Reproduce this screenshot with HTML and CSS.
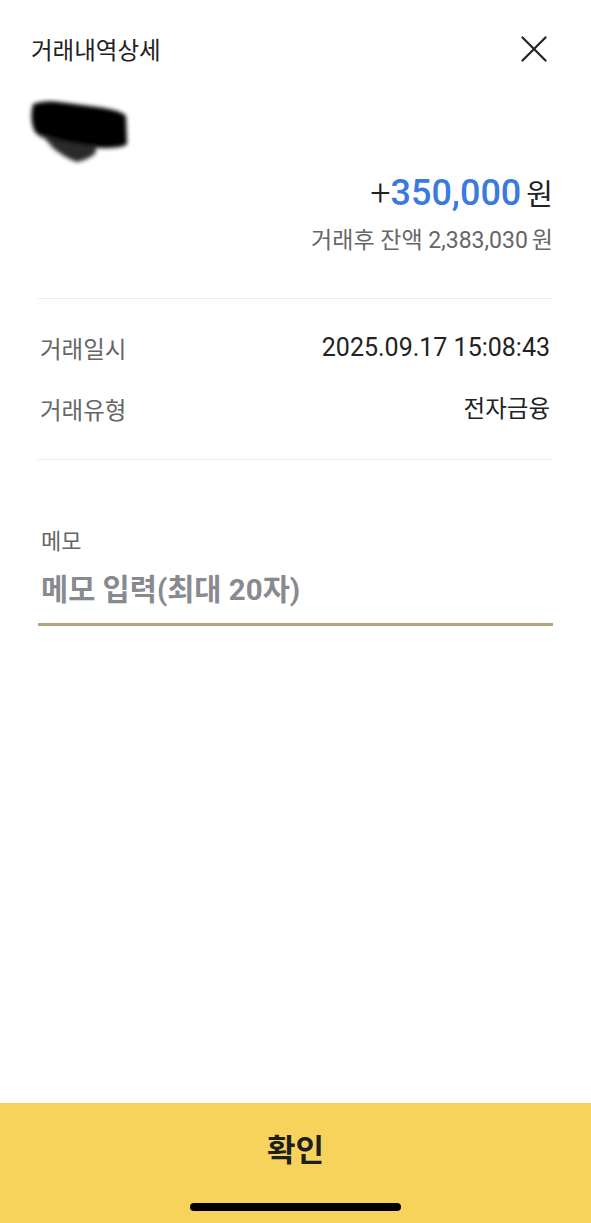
FILE: index.html
```html
<!DOCTYPE html>
<html lang="ko">
<head>
<meta charset="utf-8">
<title>거래내역상세</title>
<link rel="stylesheet" href="styles.css">
</head>
<body>
<div class="page">
  <header class="header">
    <h1 class="title">거래내역상세</h1>
    <svg class="close" width="26" height="26" viewBox="0 0 26 26" aria-label="닫기">
      <path d="M1.5 1.5 L24.5 24.5 M24.5 1.5 L1.5 24.5" stroke="#222" stroke-width="2.2" stroke-linecap="round" fill="none"/>
    </svg>
  </header>

  <div class="redact">
    <svg width="110" height="70" viewBox="0 0 110 70">
      <defs>
        <filter id="blur" x="-20%" y="-20%" width="140%" height="140%">
          <feGaussianBlur stdDeviation="2"/>
        </filter>
      </defs>
      <g filter="url(#blur)">
        <path d="M8 6 Q20 2 34 4 L72 9 Q96 12 101 18 L102 46 Q98 50 78 50 L48 48 Q20 44 10 34 Q4 22 8 6 Z" fill="#050505"/>
        <path d="M16 36 Q40 46 72 48 L70 56 Q62 62 52 64 Q40 60 28 50 Z" fill="#2c2c2c"/>
      </g>
    </svg>
  </div>

  <section class="amount-block">
    <div class="amount"><span class="sign">+</span><span class="num">350,000</span><span class="won">원</span></div>
    <div class="balance">거래후 잔액 2,383,030<span class="won-s">원</span></div>
  </section>

  <section class="details">
    <div class="row"><span class="label">거래일시</span><span class="value num-font">2025.09.17 15:08:43</span></div>
    <div class="row"><span class="label">거래유형</span><span class="value">전자금융</span></div>
  </section>

  <section class="memo">
    <div class="memo-label">메모</div>
    <input class="memo-input" type="text" placeholder="메모 입력(최대 20자)">
  </section>

  <footer class="confirm">
    <div class="confirm-text">확인</div>
    <div class="home-bar"></div>
  </footer>
</div>
</body>
</html>
```

FILE: styles.css
```css
* { box-sizing: border-box; }
html, body { margin: 0; padding: 0; background: #fff; }
body {
  font-family: Roboto, "Noto Sans CJK KR", sans-serif;
  color: #222;
}
.page {
  min-height: 1223px;
  display: flex;
  flex-direction: column;
}
.header {
  display: flex;
  align-items: center;
  justify-content: space-between;
  padding: 34px 44px 0 31px;
}
.title {
  margin: 0;
  font-size: 23.5px;
  line-height: 30px;
  font-weight: 400;
  color: #222;
  font-family: "Noto Sans CJK KR", sans-serif;
}
.close { display: block; }
.redact {
  margin-top: 34px;
  padding-left: 25px;
  height: 66px;
}
.redact svg { display: block; }
.amount-block {
  padding: 8px 38px 0;
  text-align: right;
}
.amount {
  font-size: 36px;
  line-height: 40px;
  display: flex;
  justify-content: flex-end;
  align-items: baseline;
}
.sign { color: #222; font-weight: 300; }
.num { color: #3a7ae0; font-weight: 500; }
.won {
  font-family: "Noto Sans CJK KR", sans-serif;
  font-size: 29px;
  margin-left: 5px;
  color: #222;
}
.balance {
  margin-top: 11px;
  font-size: 23px;
  line-height: 28px;
  color: #666;
}
.won-s { margin-left: 4px; font-family: "Noto Sans CJK KR", sans-serif; }
.details {
  margin: 43px 38px 0;
  border-top: 1px solid #ececec;
  border-bottom: 1px solid #ececec;
  padding: 34px 0 35px;
  display: flex;
  flex-direction: column;
  gap: 31px;
}
.row {
  display: flex;
  justify-content: space-between;
  align-items: center;
  height: 30px;
  font-size: 23.5px;
  line-height: 30px;
}
.label { color: #666; padding-left: 2px; font-family: "Noto Sans CJK KR", sans-serif; }
.value { color: #222; padding-right: 3px; }
.num-font { font-size: 25px; }
.memo {
  margin: 65px 38px 0;
}
.memo-label {
  font-size: 22px;
  line-height: 28px;
  color: #666;
  padding-left: 3px;
  font-family: "Noto Sans CJK KR", sans-serif;
}
.memo-input {
  display: block;
  width: 100%;
  margin-top: 19px;
  border: none;
  border-bottom: 3px solid #b3a37f;
  outline: none;
  padding: 0 0 15px 3px;
  font-family: Roboto, "Noto Sans CJK KR", sans-serif;
  font-size: 29.5px;
  line-height: 36px;
  height: 54px;
  font-weight: 700;
  color: #222;
  background: transparent;
}
.memo-input::placeholder { color: #878a90; opacity: 1; }
.confirm {
  margin-top: auto;
  height: 120px;
  background: #f7d35b;
  display: flex;
  flex-direction: column;
  align-items: center;
  padding-top: 25px;
}
.confirm-text {
  font-family: "Noto Sans CJK KR", sans-serif;
  font-size: 31px;
  line-height: 40px;
  font-weight: 700;
  color: #1e1e1e;
}
.home-bar {
  margin-top: 35px;
  width: 211px;
  height: 8px;
  border-radius: 4px;
  background: #000;
}
```
